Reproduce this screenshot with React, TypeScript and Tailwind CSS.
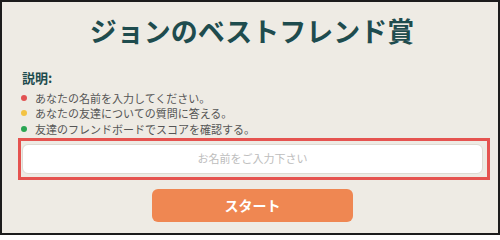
import React from "react";

const font = { fontFamily: '"Noto Sans CJK JP", "Noto Sans", sans-serif' };

export default function App() {
  const items = [
    { color: "bg-[#e25252]", text: "あなたの名前を入力してください。" },
    { color: "bg-[#f3c343]", text: "あなたの友達についての質問に答える。" },
    { color: "bg-[#2aa552]", text: "友達のフレンドボードでスコアを確認する。" },
  ];
  return (
    <div
      className="w-[500px] h-[235px] border-2 border-[#1c1c1c] bg-[#eeebe4] flex flex-col overflow-hidden"
      style={font}
    >
      <h1 className="pt-[11px] pl-[4px] text-center text-[27px] leading-[36px] font-bold text-[#1e4c4e]">
        ジョンのベストフレンド賞
      </h1>
      <div className="mt-[20px] pl-[20px] text-[13px] leading-[18px] font-bold text-[#1e4c4e]">
        説明:
      </div>
      <ul className="mt-[3px] pl-[19px] flex flex-col">
        {items.map((it) => (
          <li key={it.text} className="flex items-center h-[15.5px] text-[11px] text-[#555555]">
            <span className={`w-[6px] h-[6px] rounded-full ${it.color}`} />
            <span className="ml-[8px]">{it.text}</span>
          </li>
        ))}
      </ul>
      <div className="mt-[1px] ml-[16px] w-[472px] h-[42px] border-[3px] border-[#e5534f] pl-[1px] pr-[4px] pt-[3px]">
        <div className="h-[30px] w-full rounded-[6px] bg-white border border-[#dedbd3] flex items-center justify-center">
          <span className="text-[11px] text-[#bdbdbd]">お名前をご入力下さい</span>
        </div>
      </div>
      <div className="mt-[9px] flex justify-center pl-[5px]">
        <button className="w-[201px] h-[33px] rounded-[6px] bg-[#ef8752] text-white text-[14px] font-bold">
          スタート
        </button>
      </div>
    </div>
  );
}
